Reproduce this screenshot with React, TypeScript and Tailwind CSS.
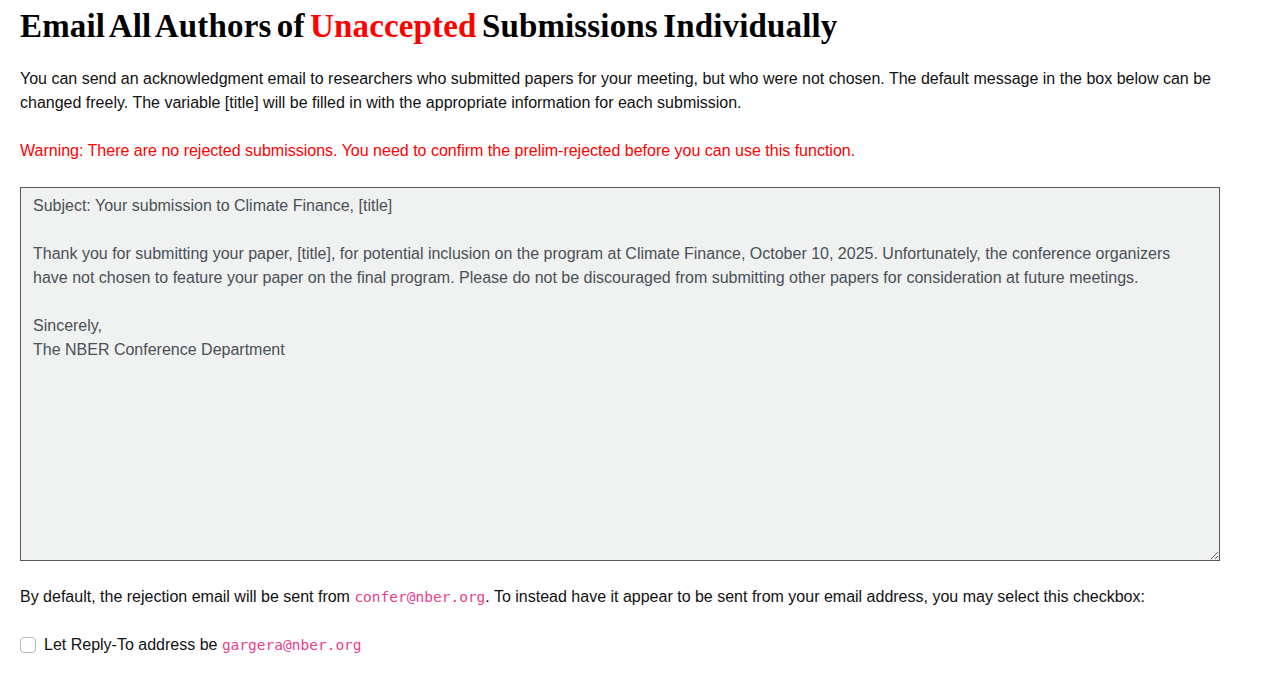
import { useState } from "react";

const defaultMessage = `Subject: Your submission to Climate Finance, [title]

Thank you for submitting your paper, [title], for potential inclusion on the program at Climate Finance, October 10, 2025. Unfortunately, the conference organizers have not chosen to feature your paper on the final program. Please do not be discouraged from submitting other papers for consideration at future meetings.

Sincerely,
The NBER Conference Department`;

export default function App() {
  const [message, setMessage] = useState(defaultMessage);
  const [replyTo, setReplyTo] = useState(false);

  return (
    <div className="min-h-screen bg-white font-['Liberation_Sans',Arial,sans-serif] text-[16px] leading-6 text-[#111]">
      <div className="w-[1200px] ml-5 pt-[6px]">
        {/* Heading */}
        <h1 className="font-['Liberation_Serif','Times_New_Roman',serif] font-bold text-[33px] leading-[40px] tracking-[0.15px] [word-spacing:-3px] text-black mb-[21px]">
          Email All Authors of <span className="text-[#ff0000]">Unaccepted</span> Submissions Individually
        </h1>

        <p className="mb-6">
          You can send an acknowledgment email to researchers who submitted papers for your meeting, but who were not
          chosen. The default message in the box below can be changed freely. The variable [title] will be filled in
          with the appropriate information for each submission.
        </p>

        <p className="mb-6 text-[#ff0000]">
          Warning: There are no rejected submissions. You need to confirm the prelim-rejected before you can use this
          function.
        </p>

        <textarea
          value={message}
          onChange={(e) => setMessage(e.target.value)}
          className="block w-[1200px] h-[374px] mb-6 px-3 py-[6px] bg-[#f0f1f1] border border-[#55585c] text-[#495057] text-[16px] leading-6 font-['Liberation_Sans',Arial,sans-serif] outline-none"
        />

        <p className="mb-6">
          By default, the rejection email will be sent from{" "}
          <code className="font-['DejaVu_Sans_Mono',monospace] text-[14.5px] text-[#e83e8c]">confer@nber.org</code>. To
          instead have it appear to be sent from your email address, you may select this checkbox:
        </p>

        <label className="flex items-center gap-2">
          <input
            type="checkbox"
            checked={replyTo}
            onChange={(e) => setReplyTo(e.target.checked)}
            className="appearance-none w-4 h-4 rounded-[4px] border border-[#b5b9bd] bg-white checked:bg-[#0d6efd]"
          />
          <span>
            Let Reply-To address be{" "}
            <code className="font-['DejaVu_Sans_Mono',monospace] text-[14.5px] text-[#e83e8c]">gargera@nber.org</code>
          </span>
        </label>
      </div>
    </div>
  );
}
